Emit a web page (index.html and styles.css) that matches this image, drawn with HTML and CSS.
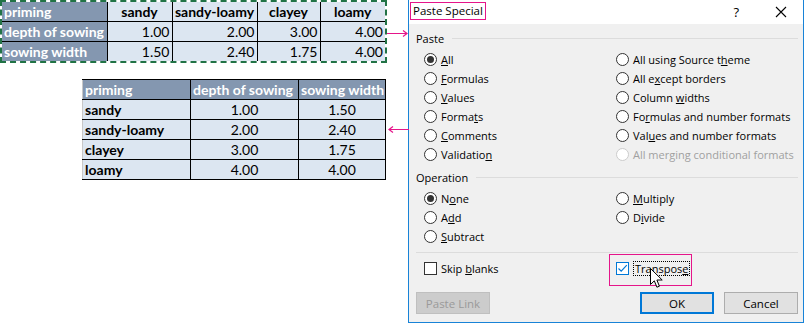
FILE: index.html
```html
<!DOCTYPE html>
<html lang="en">
<head>
    <meta charset="UTF-8">
    <title>Paste Special - Transpose</title>
    <link rel="stylesheet" href="styles.css">
</head>
<body>
    <div class="page">
        <div class="sheet">
            <div class="copy-range">
                <table class="grid src">
                    <colgroup>
                        <col class="w105"><col class="w65"><col class="w85"><col class="w63"><col class="w65">
                    </colgroup>
                    <tr>
                        <td class="head">priming</td>
                        <td class="bold center">sandy</td>
                        <td class="bold center">sandy-loamy</td>
                        <td class="bold center">clayey</td>
                        <td class="bold center">loamy</td>
                    </tr>
                    <tr>
                        <td class="head">depth of sowing</td>
                        <td class="num">1.00</td>
                        <td class="num">2.00</td>
                        <td class="num">3.00</td>
                        <td class="num">4.00</td>
                    </tr>
                    <tr>
                        <td class="head">sowing width</td>
                        <td class="num">1.50</td>
                        <td class="num">2.40</td>
                        <td class="num">1.75</td>
                        <td class="num">4.00</td>
                    </tr>
                </table>
            </div>

            <table class="grid dest">
                <colgroup>
                    <col class="w108"><col class="w108"><col class="w87">
                </colgroup>
                <tr>
                    <td class="head">priming</td>
                    <td class="head">depth of sowing</td>
                    <td class="head">sowing width</td>
                </tr>
                <tr><td class="bold">sandy</td><td class="center">1.00</td><td class="center">1.50</td></tr>
                <tr><td class="bold">sandy-loamy</td><td class="center">2.00</td><td class="center">2.40</td></tr>
                <tr><td class="bold">clayey</td><td class="center">3.00</td><td class="center">1.75</td></tr>
                <tr><td class="bold">loamy</td><td class="center">4.00</td><td class="center">4.00</td></tr>
            </table>
        </div>

        <div class="dialog">
            <div class="titlebar">
                <span class="title">Paste Special</span>
                <span class="help">?</span>
                <span class="close">
                    <svg width="12" height="12" viewBox="0 0 12 12"><path d="M1 1L11 11M11 1L1 11" stroke="#000" stroke-width="1.1"/></svg>
                </span>
            </div>
            <div class="dlg-body">
                <div class="group-label"><span>Paste</span></div>
                <div class="options">
                    <div class="opt"><span class="radio on"></span><span><u>A</u>ll</span></div>
                    <div class="opt"><span class="radio"></span><span>All using Source t<u>h</u>eme</span></div>
                    <div class="opt"><span class="radio"></span><span><u>F</u>ormulas</span></div>
                    <div class="opt"><span class="radio"></span><span>All e<u>x</u>cept borders</span></div>
                    <div class="opt"><span class="radio"></span><span><u>V</u>alues</span></div>
                    <div class="opt"><span class="radio"></span><span>Column <u>w</u>idths</span></div>
                    <div class="opt"><span class="radio"></span><span>Forma<u>t</u>s</span></div>
                    <div class="opt"><span class="radio"></span><span>Fo<u>r</u>mulas and number formats</span></div>
                    <div class="opt"><span class="radio"></span><span><u>C</u>omments</span></div>
                    <div class="opt"><span class="radio"></span><span>Val<u>u</u>es and number formats</span></div>
                    <div class="opt"><span class="radio"></span><span>Validatio<u>n</u></span></div>
                    <div class="opt disabled"><span class="radio"></span><span>All merging conditional formats</span></div>
                </div>

                <div class="group-label op"><span>Operation</span></div>
                <div class="options">
                    <div class="opt"><span class="radio on"></span><span>N<u>o</u>ne</span></div>
                    <div class="opt"><span class="radio"></span><span><u>M</u>ultiply</span></div>
                    <div class="opt"><span class="radio"></span><span>A<u>d</u>d</span></div>
                    <div class="opt"><span class="radio"></span><span>D<u>i</u>vide</span></div>
                    <div class="opt"><span class="radio"></span><span><u>S</u>ubtract</span></div>
                </div>

                <div class="sep"></div>

                <div class="options checks">
                    <div class="opt"><span class="check"></span><span>Skip <u>b</u>lanks</span></div>
                    <div class="opt transpose">
                        <span class="check on">
                            <svg width="11" height="11" viewBox="0 0 11 11"><path d="M1.5 5.5L4.2 8.2L9.8 2.2" fill="none" stroke="#0078d7" stroke-width="1.2"/></svg>
                        </span>
                        <span class="focus">Transpos<u>e</u></span>
                        <svg class="cursor" width="14" height="21" viewBox="0 0 14 21">
                            <path d="M0.5 0.5V16.5L4.3 12.8L6.9 19.2L9.4 18.2L6.9 12H12.2Z" fill="#fff" stroke="#000" stroke-width="1"/>
                        </svg>
                    </div>
                </div>

                <div class="buttons">
                    <button class="btn disabled">Paste Link</button>
                    <span class="spacer"></span>
                    <button class="btn default">OK</button>
                    <button class="btn">Cancel</button>
                </div>
            </div>
        </div>

        <svg class="arrow arrow-in" width="22" height="9" viewBox="0 0 22 9"><path d="M0 4.5H20M16 1.5L20 4.5L16 7.5" fill="none" stroke="#e5158a" stroke-width="1.2"/></svg>
        <svg class="arrow arrow-out" width="22" height="9" viewBox="0 0 22 9"><path d="M22 4.5H2M6 1.5L2 4.5L6 7.5" fill="none" stroke="#e5158a" stroke-width="1.2"/></svg>
    </div>
</body>
</html>
```

FILE: styles.css
```css
body {
    margin: 0;
    background: #fff;
    font-family: "Open Sans", "Noto Sans", sans-serif;
}
.page {
    position: relative;
    display: flex;
    width: 806px;
    height: 323px;
    overflow: hidden;
}

/* worksheet side */
.sheet {
    width: 408px;
    flex: none;
    font-family: Lato, "Liberation Sans", sans-serif;
    font-size: 14px;
}
.copy-range {
    width: 383px;
    border: 2px dashed #217346;
}
.grid {
    border-collapse: collapse;
    table-layout: fixed;
}
.grid td {
    height: 19px;
    padding: 0 2px;
    border: 1px solid #000;
    background: #dce6f1;
    color: #000;
    white-space: nowrap;
    overflow: hidden;
    line-height: 19px;
}
.src {
    width: 383px;
}
.src tr:first-child td {
    border-top: none;
}
.src tr:last-child td {
    border-bottom: none;
}
.src td:first-child {
    border-left: none;
}
.src td:last-child {
    border-right: none;
}
.dest {
    width: 303px;
    margin: 16px 0 0 82px;
}
.dest td:first-child {
    border-left-color: #c8c8c8;
}
.grid td.head {
    background: #8497b0;
    color: #fff;
    font-weight: bold;
}
.bold {
    font-weight: bold;
}
.center {
    text-align: center;
}
.num {
    text-align: right;
}
.w105 { width: 105px; }
.w65 { width: 65px; }
.w85 { width: 85px; }
.w63 { width: 63px; }
.w108 { width: 108px; }
.w87 { width: 87px; }

/* dialog */
.dialog {
    width: 394px;
    height: 322px;
    flex: none;
    background: #f0f0f0;
    border: 1px solid #1883d7;
    border-top: none;
    font-size: 11px;
    color: #000;
    white-space: nowrap;
}
.titlebar {
    display: flex;
    align-items: center;
    height: 24px;
    background: #fff;
    padding-left: 1px;
}
.title {
    border: 1px solid #e5158a;
    padding: 0 2px;
    height: 16px;
    line-height: 16px;
    margin-top: -3px;
    font-size: 11.5px;
}
.help {
    margin-left: auto;
    margin-right: 36px;
    font-size: 13px;
}
.close {
    display: flex;
    margin-right: 16px;
}
.dlg-body {
    padding: 6px 5px 0 7px;
}
.group-label {
    display: flex;
    align-items: center;
    height: 16px;
}
.group-label::after {
    content: "";
    flex: 1;
    height: 1px;
    background: #dcdcdc;
    margin-left: 8px;
}
.group-label.op {
    margin-top: 5px;
}
.options {
    display: grid;
    grid-template-columns: 192px 1fr;
    grid-auto-rows: 19px;
    margin-top: 4px;
    padding-left: 8px;
}
.opt {
    display: flex;
    align-items: center;
    gap: 4px;
}
.opt.disabled {
    color: #a0a0a0;
}
.radio {
    width: 11px;
    height: 11px;
    border: 1px solid #333;
    border-radius: 50%;
    background: #fff;
    display: flex;
    align-items: center;
    justify-content: center;
}
.radio.on::after {
    content: "";
    width: 7px;
    height: 7px;
    border-radius: 50%;
    background: #333;
}
.disabled .radio {
    border-color: #cccccc;
}
.sep {
    height: 1px;
    background: #dcdcdc;
    margin: 6px 0 0 0;
}
.checks {
    margin-top: 6px;
}
.check {
    width: 11px;
    height: 11px;
    border: 1px solid #333;
    background: #fff;
    display: flex;
}
.check.on {
    border-color: #0078d7;
}
.transpose {
    position: relative;
}
.transpose::before {
    content: "";
    position: absolute;
    left: -7px;
    top: -5px;
    width: 81px;
    height: 30px;
    border: 1px solid #e5158a;
}
.focus {
    border: 1px dotted #000;
    padding: 0 1px;
    line-height: 13px;
}
.cursor {
    position: absolute;
    left: 34px;
    top: 9px;
}
.buttons {
    display: flex;
    gap: 10px;
    margin-top: 14px;
}
.spacer {
    flex: 1;
}
.btn {
    width: 74px;
    height: 22px;
    font-family: inherit;
    font-size: 11.5px;
    background: #e1e1e1;
    border: 1px solid #adadad;
    padding: 0;
    color: #000;
}
.btn.default {
    border: 2px solid #0078d7;
}
.btn.disabled {
    background: #cccccc;
    border-color: #bfbfbf;
    color: #9a9a9a;
}

/* annotation arrows */
.arrow {
    position: absolute;
}
.arrow-in {
    left: 387px;
    top: 29px;
}
.arrow-out {
    left: 387px;
    top: 125px;
}
```
